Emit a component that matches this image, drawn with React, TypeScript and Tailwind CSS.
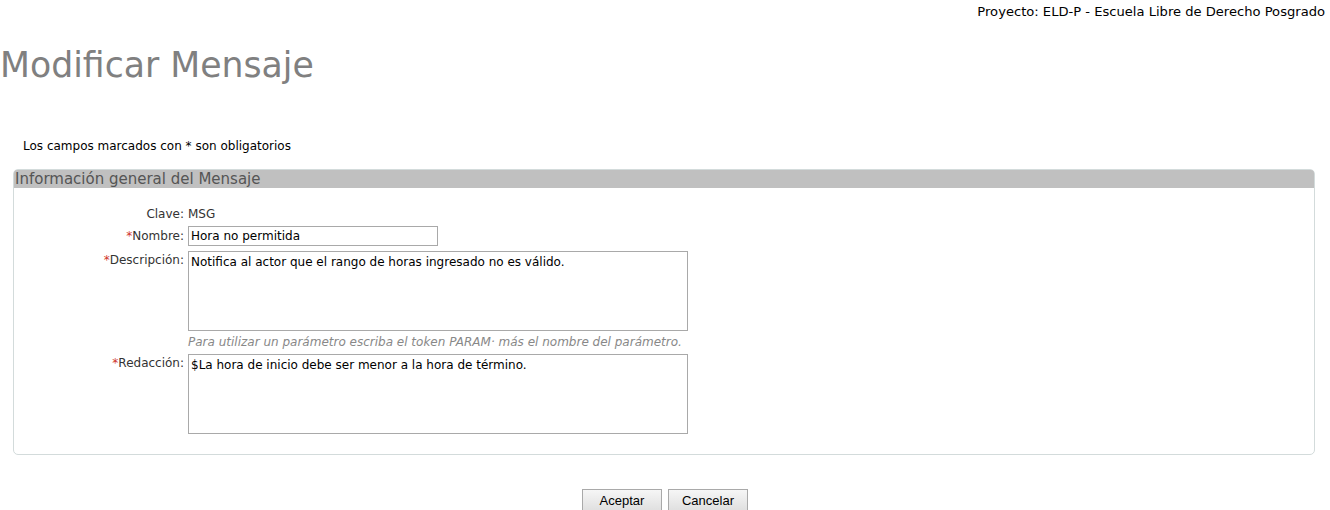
import React from "react";

const font = "font-['DejaVu_Sans',sans-serif]";

export default function App() {
  return (
    <div className={`h-[510px] w-[1330px] overflow-hidden bg-white text-[#333] ${font}`}>
      {/* Project line */}
      <div className="flex justify-end pr-[5px] pt-[3px] text-[13.1px] leading-[17px] text-black">
        Proyecto: ELD-P - Escuela Libre de Derecho Posgrado
      </div>

      {/* Title */}
      <h1 className="mt-[23px] text-[34.7px] leading-[44px] text-[#808080]">Modificar Mensaje</h1>

      <p className="ml-[23px] mt-[51px] text-[12px] leading-[16px] text-black">
        Los campos marcados con * son obligatorios
      </p>

      {/* Fieldset */}
      <div className="ml-[13px] mt-[15px] h-[286px] w-[1302px] rounded-[5px] border border-[#d3dbdb]">
        <div className="h-[18px] rounded-t-[3px] bg-[#c0c0c0] pl-[1px] text-[15px] leading-[18px] text-[#555]">
          Información general del Mensaje
        </div>

        <div className="mt-[18px] grid grid-cols-[170px_500px] gap-x-[4px] text-[12px]">
          {/* Clave */}
          <div className="h-[16px] text-right leading-[16px]">Clave:</div>
          <div className="h-[16px] leading-[16px]">MSG</div>

          {/* Nombre */}
          <div className="mt-[4px] text-right leading-[20px]">
            <span className="text-[#d0342c]">*</span>Nombre:
          </div>
          <div className="mt-[4px]">
            <div className="h-[20px] w-[250px] border border-[#a9a9a9] px-[2px] leading-[18px] text-black">
              Hora no permitida
            </div>
          </div>

          {/* Descripción */}
          <div className="mt-[5px] pt-[1px] text-right leading-[16px]">
            <span className="text-[#d0342c]">*</span>Descripción:
          </div>
          <div className="mt-[5px]">
            <div className="h-[80px] w-[500px] border border-[#a9a9a9] px-[2px] pt-[2px] leading-[16px] text-black">
              Notifica al actor que el rango de horas ingresado no es válido.
            </div>
            <div className="mt-[3px] h-[16px] italic leading-[16px] text-[#888]">
              Para utilizar un parámetro escriba el token PARAM· más el nombre del parámetro.
            </div>
          </div>

          {/* Redacción */}
          <div className="mt-[4px] pt-[1px] text-right leading-[16px]">
            <span className="text-[#d0342c]">*</span>Redacción:
          </div>
          <div className="mt-[4px]">
            <div className="h-[80px] w-[500px] border border-[#a9a9a9] px-[2px] pt-[2px] leading-[16px] text-black">
              $La hora de inicio debe ser menor a la hora de término.
            </div>
          </div>
        </div>
      </div>

      {/* Buttons */}
      <div className="mt-[34px] flex justify-center gap-[6px] font-['Liberation_Sans',sans-serif] text-[13px] text-black">
        <button
          type="button"
          className="h-[24px] w-[80px] border border-[#a9a9a9] bg-gradient-to-b from-[#f6f6f6] to-[#dedede] leading-[20px]"
        >
          Aceptar
        </button>
        <button
          type="button"
          className="h-[24px] w-[80px] border border-[#a9a9a9] bg-gradient-to-b from-[#f6f6f6] to-[#dedede] leading-[20px]"
        >
          Cancelar
        </button>
      </div>
    </div>
  );
}
